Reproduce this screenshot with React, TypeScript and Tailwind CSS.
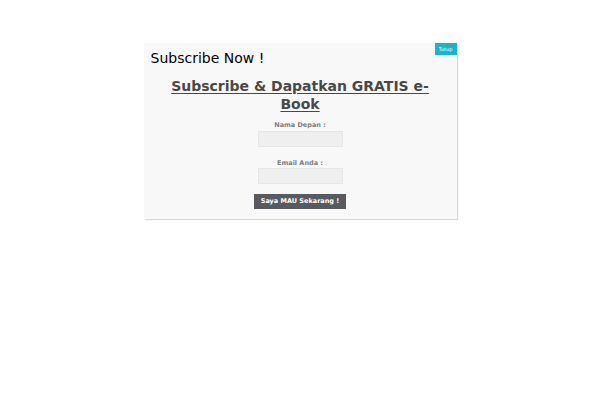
import React from 'react';

export default function App() {
  return (
    <div className="w-[600px] h-[400px] bg-white pt-[43px]" style={{ fontFamily: '"DejaVu Sans", sans-serif' }}>
      <div className="mx-auto w-[313px] h-[176px] bg-[#f8f8f8] shadow-[1px_1px_1px_rgba(0,0,0,0.15)] relative">
        <button className="absolute top-0 right-0 w-[22px] h-[12px] bg-[#17b5cc] text-white text-[5px] leading-[12px] text-center">
          Tutup
        </button>
        <div className="pt-[7px] pl-[7px] text-[14px] leading-[17px] text-black">Subscribe Now !</div>
        <h2 className="mt-[10px] px-[24px] text-center text-[14px] leading-[18px] font-bold text-[#484848] underline underline-offset-2">
          Subscribe &amp; Dapatkan GRATIS e-Book
        </h2>
        <div className="mt-[8px] flex flex-col items-center">
          <label className="text-[6.5px] leading-[8px] font-bold text-[#7f7f7f]">Nama Depan :</label>
          <input className="mt-[2px] w-[85px] h-[16px] bg-[#efefef] border border-[#e6e6e6]" />
          <label className="mt-[12px] text-[6.5px] leading-[8px] font-bold text-[#7f7f7f]">Email Anda :</label>
          <input className="mt-[1px] w-[85px] h-[16px] bg-[#efefef] border border-[#e6e6e6]" />
          <button className="mt-[10px] w-[92px] h-[15px] bg-[#575b60] text-white text-[6.5px] leading-[15px] font-bold">
            Saya MAU Sekarang !
          </button>
        </div>
      </div>
    </div>
  );
}
